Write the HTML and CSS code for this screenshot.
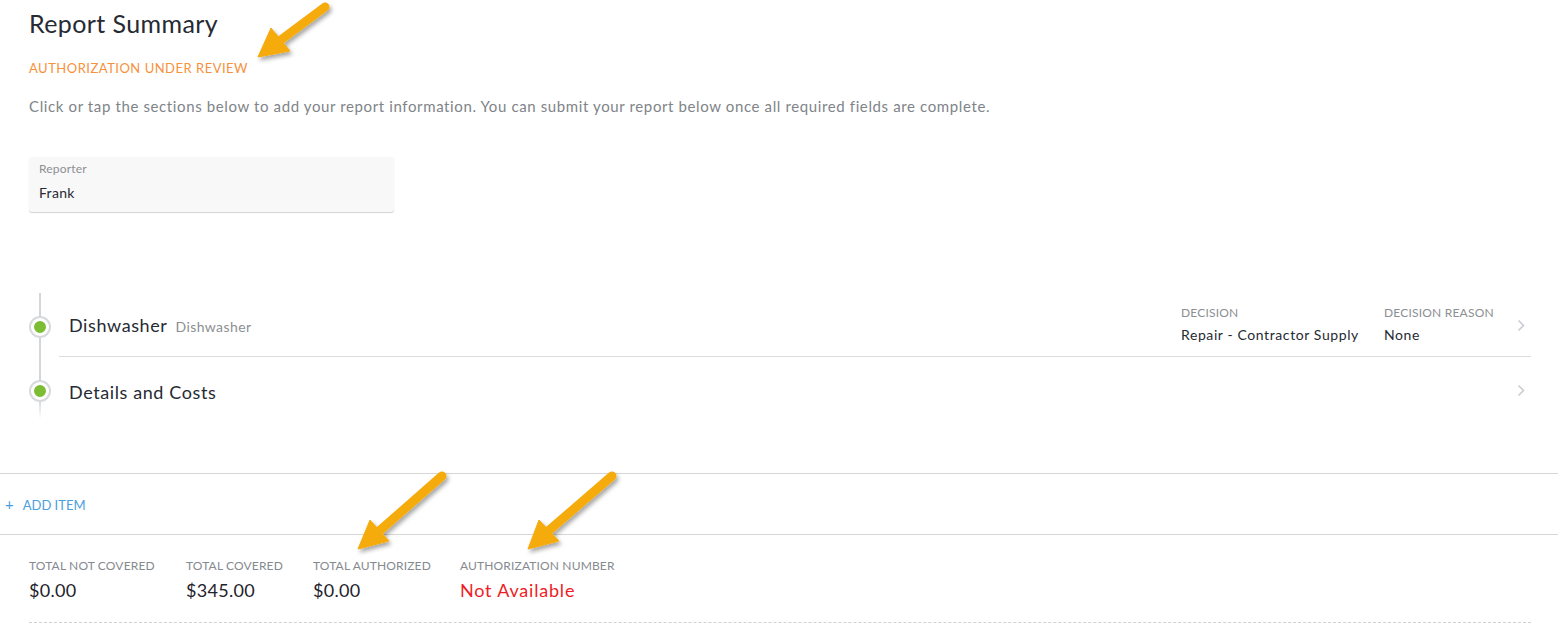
FILE: index.html
```html
<!DOCTYPE html>
<html lang="en">
<head>
<meta charset="utf-8">
<title>Report Summary</title>
<link rel="stylesheet" href="styles.css">
</head>
<body>
<div class="page">
  <header class="summary">
    <h1 class="title">Report Summary</h1>
    <p class="status">AUTHORIZATION UNDER REVIEW</p>
    <p class="intro">Click or tap the sections below to add your report information. You can submit your report below once all required fields are complete.</p>
    <div class="reporter-card">
      <span class="field-label">Reporter</span>
      <span class="field-value">Frank</span>
    </div>
  </header>

  <section class="timeline">
    <div class="tl-row">
      <span class="tl-dot"></span>
      <div class="tl-body bordered">
        <div class="tl-name"><span class="tl-title">Dishwasher</span><span class="tl-sub">Dishwasher</span></div>
        <div class="tl-meta">
          <div class="meta-col decision">
            <span class="meta-label">DECISION</span>
            <span class="meta-value">Repair - Contractor Supply</span>
          </div>
          <div class="meta-col reason">
            <span class="meta-label">DECISION REASON</span>
            <span class="meta-value">None</span>
          </div>
        </div>
        <svg class="chevron" width="8" height="13" viewBox="0 0 8 13"><path d="M1.5 1.5 L6.5 6.5 L1.5 11.5" fill="none" stroke="#c9cdd1" stroke-width="1.6"/></svg>
      </div>
    </div>
    <div class="tl-row">
      <span class="tl-dot"></span>
      <div class="tl-body">
        <div class="tl-name"><span class="tl-title">Details and Costs</span></div>
        <div class="tl-meta"></div>
        <svg class="chevron" width="8" height="13" viewBox="0 0 8 13"><path d="M1.5 1.5 L6.5 6.5 L1.5 11.5" fill="none" stroke="#c9cdd1" stroke-width="1.6"/></svg>
      </div>
    </div>
  </section>

  <div class="add-bar">
    <span class="add-item"><span class="plus">+</span>ADD ITEM</span>
  </div>

  <div class="totals">
    <div class="total">
      <span class="total-label">TOTAL NOT COVERED</span>
      <span class="total-value">$0.00</span>
    </div>
    <div class="total">
      <span class="total-label">TOTAL COVERED</span>
      <span class="total-value">$345.00</span>
    </div>
    <div class="total">
      <span class="total-label">TOTAL AUTHORIZED</span>
      <span class="total-value">$0.00</span>
    </div>
    <div class="total">
      <span class="total-label">AUTHORIZATION NUMBER</span>
      <span class="total-value alert">Not Available</span>
    </div>
  </div>

  <svg class="annotations" width="1558" height="624" viewBox="0 0 1558 624">
    <defs>
      <filter id="shadow" x="-20%" y="-20%" width="140%" height="140%">
        <feDropShadow dx="2" dy="3" stdDeviation="2" flood-color="#000" flood-opacity="0.35"/>
      </filter>
    </defs>
    <g fill="#f6ab0c" stroke="#f6ab0c" filter="url(#shadow)">
      <line x1="325" y1="7" x2="278" y2="42" stroke-width="9" stroke-linecap="round"/>
      <polygon points="258,57 271,28 290,51" stroke-width="1" stroke-linejoin="round"/>
      <line x1="442" y1="476" x2="377" y2="533" stroke-width="9" stroke-linecap="round"/>
      <polygon points="358,549 370,520 389,541" stroke-width="1" stroke-linejoin="round"/>
      <line x1="612" y1="476" x2="546" y2="533" stroke-width="9" stroke-linecap="round"/>
      <polygon points="528,549 539,520 559,541" stroke-width="1" stroke-linejoin="round"/>
    </g>
  </svg>
</div>
</body>
</html>
```
FILE: styles.css
```css
* { box-sizing: border-box; }
html, body { margin: 0; padding: 0; background: #fff; }
body {
  font-family: Lato, "Open Sans", "Liberation Sans", sans-serif;
  color: #2b2d33;
}
.page {
  position: relative;
  width: 1558px;
  height: 624px;
  overflow: hidden;
}
.summary {
  padding: 7px 0 0 29px;
}
.title {
  margin: 0;
  font-size: 25px;
  line-height: 32px;
  font-weight: 400;
  letter-spacing: 0.4px;
  color: #262a33;
}
.status {
  margin: 21px 0 0;
  font-size: 13px;
  line-height: 16px;
  letter-spacing: 0.5px;
  color: #f7913a;
}
.intro {
  margin: 20px 0 0;
  font-size: 15px;
  line-height: 20px;
  letter-spacing: 0.62px;
  color: #808489;
}
.reporter-card {
  margin-top: 41px;
  width: 365px;
  height: 55px;
  background: #f8f8f8;
  border-radius: 3px;
  box-shadow: 0 1px 1px rgba(0,0,0,0.18);
  padding: 5px 10px 0;
  display: flex;
  flex-direction: column;
}
.field-label {
  font-size: 12px;
  line-height: 14px;
  letter-spacing: 0.2px;
  color: #8c8f93;
}
.field-value {
  margin-top: 8px;
  font-size: 14px;
  line-height: 18px;
  letter-spacing: 0.3px;
  color: #262a33;
}

.timeline {
  margin: 81px 0 0 29px;
  width: 1502px;
  position: relative;
}
.timeline::before {
  content: "";
  position: absolute;
  left: 10px;
  top: 0;
  width: 2px;
  height: 126px;
  background: linear-gradient(#d4d7da 0, #d4d7da 85%, rgba(212,215,218,0) 100%);
}
.tl-row {
  display: flex;
  align-items: stretch;
  position: relative;
}
.tl-dot {
  position: absolute;
  left: 2px;
  top: 25px;
  width: 18px;
  height: 18px;
  border-radius: 50%;
  background: #7dbd34;
  border: 3px solid #fff;
  box-shadow: 0 0 0 2px #d7dadc;
}
.tl-body {
  margin-left: 30px;
  flex: 1;
  display: flex;
  align-items: center;
  padding-left: 10px;
  height: 70px;
}
.tl-row:first-child .tl-body { height: 64px; padding-top: 4px; }
.tl-body.bordered { border-bottom: 1px solid #dadcde; }
.tl-name { flex: 1; display: flex; align-items: baseline; }
.tl-row:first-child .tl-name { margin-top: -4px; }
.tl-title {
  font-size: 18px;
  letter-spacing: 0.6px;
  color: #262a33;
}
.tl-sub {
  margin-left: 8px;
  font-size: 14px;
  letter-spacing: 0.4px;
  color: #8c8f93;
}
.tl-meta { display: flex; }
.meta-col { display: flex; flex-direction: column; }
.meta-col.decision { width: 203px; }
.meta-col.reason { width: 136px; }
.meta-label {
  font-size: 12px;
  line-height: 14px;
  letter-spacing: 0.2px;
  color: #8c8f93;
  margin-top: -3px;
}
.meta-value {
  margin-top: 6px;
  font-size: 14px;
  line-height: 18px;
  letter-spacing: 0.6px;
  color: #262a33;
}
.chevron {
  margin-right: 6px;
  margin-left: -3px;
  margin-top: -3px;
}

.add-bar {
  margin-top: 46px;
  border-top: 1px solid #d6d6d6;
  border-bottom: 1px solid #d6d6d6;
  height: 62px;
  display: flex;
  align-items: center;
  padding-left: 5px;
}
.add-item {
  font-size: 13px;
  color: #4aa0dd;
}
.plus {
  font-size: 15px;
  margin-right: 9px;
}

.totals {
  margin: 0 27px 0 29px;
  padding-top: 24px;
  height: 88px;
  border-bottom: 1px dashed #cfd1d3;
  display: grid;
  grid-template-columns: 157px 127px 147px auto;
  justify-content: start;
}
.total {
  display: flex;
  flex-direction: column;
}
.total-label {
  font-size: 12px;
  line-height: 14px;
  color: #858a8f;
  letter-spacing: 0.15px;
}
.total-value {
  margin-top: 5px;
  font-size: 18px;
  line-height: 24px;
  letter-spacing: 0.3px;
  color: #1f232b;
}
.total-value.alert { color: #ee1c25; letter-spacing: 0.8px; }

.annotations {
  position: absolute;
  left: 0;
  top: 0;
  pointer-events: none;
}
```
